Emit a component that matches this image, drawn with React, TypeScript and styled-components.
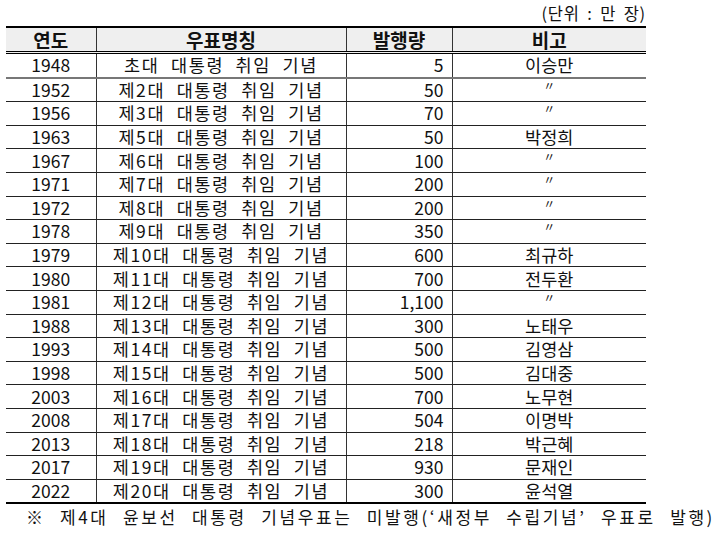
import styled, { createGlobalStyle } from 'styled-components';

const GlobalStyle = createGlobalStyle`
  html, body {
    margin: 0;
    padding: 0;
    background: #ffffff;
  }
  body {
    font-family: "Noto Sans CJK KR", "Noto Sans", sans-serif;
    color: #111111;
  }
`;

const Page = styled.div`
  width: 720px;
  height: 540px;
  padding: 2px 0 0 6px;
  box-sizing: border-box;
`;

const Unit = styled.div`
  width: 640px;
  text-align: right;
  font-size: 16.5px;
  line-height: 22px;
  letter-spacing: 0.8px;
  word-spacing: 3px;
  height: 24px;
`;

const Table = styled.table`
  width: 640px;
  border-collapse: collapse;
  table-layout: fixed;
  border-top: 2px solid #000;
  border-bottom: 2px solid #000;
`;

const HeadCell = styled.th`
  background: #efefef;
  height: 23px;
  padding: 0;
  font-size: 19px;
  font-weight: 700;
  line-height: 23px;
  border-left: 1px solid #333;
  border-bottom: 3px double #000;
  &:first-child {
    border-left: none;
  }
`;

const Row = styled.tr<{ $first?: boolean }>`
  td {
    border-bottom: ${({ $first }) => ($first ? '2px solid #777' : '1px solid #222')};
  }
  &:last-child td {
    border-bottom: none;
  }
`;

const Cell = styled.td<{ $align?: 'left' | 'center' | 'right'; $wide?: boolean }>`
  height: 22.6px;
  padding: 0 ${({ $align }) => ($align === 'right' ? '8px' : '0')} 0 0;
  font-size: 17.5px;
  line-height: 22px;
  text-align: ${({ $align }) => $align ?? 'center'};
  letter-spacing: ${({ $wide }) => ($wide ? '1.6px' : '0')};
  word-spacing: ${({ $wide }) => ($wide ? '6px' : '0')};
  border-left: 1px solid #333;
  white-space: nowrap;
  &:first-child {
    border-left: none;
  }
`;

const Ditto = styled.span`
  display: inline-block;
  font-size: 12px;
  line-height: 14px;
  height: 14px;
  vertical-align: top;
`;

const Note = styled.div`
  padding-left: 20px;
  font-size: 17px;
  line-height: 26px;
  letter-spacing: 2.6px;
  word-spacing: 8px;
  white-space: nowrap;
`;

const rows: [string, string, string, string][] = [
  ['1948', '초대 대통령 취임 기념', '5', '이승만'],
  ['1952', '제2대 대통령 취임 기념', '50', '〃'],
  ['1956', '제3대 대통령 취임 기념', '70', '〃'],
  ['1963', '제5대 대통령 취임 기념', '50', '박정희'],
  ['1967', '제6대 대통령 취임 기념', '100', '〃'],
  ['1971', '제7대 대통령 취임 기념', '200', '〃'],
  ['1972', '제8대 대통령 취임 기념', '200', '〃'],
  ['1978', '제9대 대통령 취임 기념', '350', '〃'],
  ['1979', '제10대 대통령 취임 기념', '600', '최규하'],
  ['1980', '제11대 대통령 취임 기념', '700', '전두환'],
  ['1981', '제12대 대통령 취임 기념', '1,100', '〃'],
  ['1988', '제13대 대통령 취임 기념', '300', '노태우'],
  ['1993', '제14대 대통령 취임 기념', '500', '김영삼'],
  ['1998', '제15대 대통령 취임 기념', '500', '김대중'],
  ['2003', '제16대 대통령 취임 기념', '700', '노무현'],
  ['2008', '제17대 대통령 취임 기념', '504', '이명박'],
  ['2013', '제18대 대통령 취임 기념', '218', '박근혜'],
  ['2017', '제19대 대통령 취임 기념', '930', '문재인'],
  ['2022', '제20대 대통령 취임 기념', '300', '윤석열'],
];

export default function App() {
  return (
    <Page>
      <GlobalStyle />
      <Unit>(단위 : 만 장)</Unit>
      <Table>
        <colgroup>
          <col style={{ width: 90 }} />
          <col style={{ width: 250 }} />
          <col style={{ width: 106 }} />
          <col style={{ width: 194 }} />
        </colgroup>
        <thead>
          <tr>
            <HeadCell>연도</HeadCell>
            <HeadCell>우표명칭</HeadCell>
            <HeadCell>발행량</HeadCell>
            <HeadCell>비고</HeadCell>
          </tr>
        </thead>
        <tbody>
          {rows.map(([year, name, count, note], i) => (
            <Row key={year} $first={i === 0}>
              <Cell>{year}</Cell>
              <Cell $wide>{name}</Cell>
              <Cell $align="right">{count}</Cell>
              <Cell>{note === '〃' ? <Ditto>〃</Ditto> : note}</Cell>
            </Row>
          ))}
        </tbody>
      </Table>
      <Note>※ 제4대 윤보선 대통령 기념우표는 미발행(‘새정부 수립기념’ 우표로 발행)</Note>
    </Page>
  );
}
